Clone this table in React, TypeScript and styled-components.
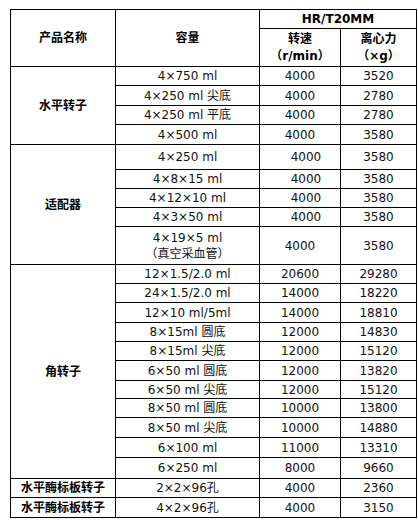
import React from 'react';
import styled, { createGlobalStyle } from 'styled-components';

const GlobalStyle = createGlobalStyle`
  html, body {
    margin: 0;
    padding: 0;
    background: #fff;
  }
  body {
    font-family: 'DejaVu Sans', 'Noto Sans CJK SC', sans-serif;
    font-size: 12px;
    color: #111;
  }
`;

const Page = styled.div`
  padding: 9px 0 0 10px;
`;

const Table = styled.table`
  border-collapse: collapse;
  table-layout: fixed;
  width: 407px;
`;

const HeadCell = styled.th<{ h?: number }>`
  border: 1px solid #000;
  padding: 0;
  height: ${({ h }) => (h ? `${h - 1}px` : 'auto')};
  font-weight: bold;
  text-align: center;
  vertical-align: middle;
  line-height: 17px;
  color: #000;
`;

const GroupCell = styled.td`
  border: 1px solid #000;
  padding: 0;
  font-weight: bold;
  text-align: center;
  vertical-align: middle;
  line-height: 16px;
  color: #000;
`;

const Cell = styled.td<{ h: number; nudge?: number }>`
  border: 1px solid #000;
  padding: 0 0 0 ${({ nudge }) => nudge ?? 0}px;
  height: ${({ h }) => h - 1}px;
  text-align: center;
  vertical-align: middle;
  line-height: 16px;
  white-space: nowrap;
`;

interface Row {
  cap: React.ReactNode;
  speed: string;
  force: string;
  h: number;
  nudge?: number;
}

interface Group {
  name: string;
  rows: Row[];
}

const groups: Group[] = [
  {
    name: '水平转子',
    rows: [
      { cap: '4×750 ml', speed: '4000', force: '3520', h: 19 },
      { cap: '4×250 ml 尖底', speed: '4000', force: '2780', h: 20 },
      { cap: '4×250 ml 平底', speed: '4000', force: '2780', h: 19 },
      { cap: '4×500 ml', speed: '4000', force: '3580', h: 20 },
    ],
  },
  {
    name: '适配器',
    rows: [
      { cap: '4×250 ml', speed: '4000', force: '3580', h: 25, nudge: 12 },
      { cap: '4×8×15 ml', speed: '4000', force: '3580', h: 19, nudge: 12 },
      { cap: '4×12×10 ml', speed: '4000', force: '3580', h: 19, nudge: 12 },
      { cap: '4×3×50 ml', speed: '4000', force: '3580', h: 19, nudge: 12 },
      {
        cap: (
          <>
            4×19×5 ml
            <br />
            （真空采血管）
          </>
        ),
        speed: '4000',
        force: '3580',
        h: 38,
      },
    ],
  },
  {
    name: '角转子',
    rows: [
      { cap: '12×1.5/2.0 ml', speed: '20600', force: '29280', h: 19 },
      { cap: '24×1.5/2.0 ml', speed: '14000', force: '18220', h: 19 },
      { cap: '12×10 ml/5ml', speed: '14000', force: '18810', h: 20 },
      { cap: '8×15ml 圆底', speed: '12000', force: '14830', h: 19 },
      { cap: '8×15ml 尖底', speed: '12000', force: '15120', h: 19 },
      { cap: '6×50 ml 圆底', speed: '12000', force: '13820', h: 20 },
      { cap: '6×50 ml 尖底', speed: '12000', force: '15120', h: 18 },
      { cap: '8×50 ml 圆底', speed: '10000', force: '13800', h: 19 },
      { cap: '8×50 ml 尖底', speed: '10000', force: '14880', h: 20 },
      { cap: '6×100 ml', speed: '11000', force: '13310', h: 20 },
      { cap: '6×250 ml', speed: '8000', force: '9660', h: 21 },
    ],
  },
  {
    name: '水平酶标板转子',
    rows: [{ cap: '2×2×96孔', speed: '4000', force: '2360', h: 19 }],
  },
  {
    name: '水平酶标板转子',
    rows: [{ cap: '4×2×96孔', speed: '4000', force: '3150', h: 20 }],
  },
];

export default function App() {
  return (
    <Page>
      <GlobalStyle />
      <Table>
        <colgroup>
          <col style={{ width: 105 }} />
          <col style={{ width: 144 }} />
          <col style={{ width: 81 }} />
          <col style={{ width: 76 }} />
        </colgroup>
        <thead>
          <tr>
            <HeadCell rowSpan={2}>产品名称</HeadCell>
            <HeadCell rowSpan={2}>容量</HeadCell>
            <HeadCell colSpan={2} h={19}>
              HR/T20MM
            </HeadCell>
          </tr>
          <tr>
            <HeadCell h={38}>
              转速
              <br />
              （r/min）
            </HeadCell>
            <HeadCell h={38}>
              离心力
              <br />
              （×g）
            </HeadCell>
          </tr>
        </thead>
        <tbody>
          {groups.map((g, gi) =>
            g.rows.map((r, ri) => (
              <tr key={`${gi}-${ri}`}>
                {ri === 0 && <GroupCell rowSpan={g.rows.length}>{g.name}</GroupCell>}
                <Cell h={r.h}>{r.cap}</Cell>
                <Cell h={r.h} nudge={r.nudge}>
                  {r.speed}
                </Cell>
                <Cell h={r.h}>{r.force}</Cell>
              </tr>
            ))
          )}
        </tbody>
      </Table>
    </Page>
  );
}
